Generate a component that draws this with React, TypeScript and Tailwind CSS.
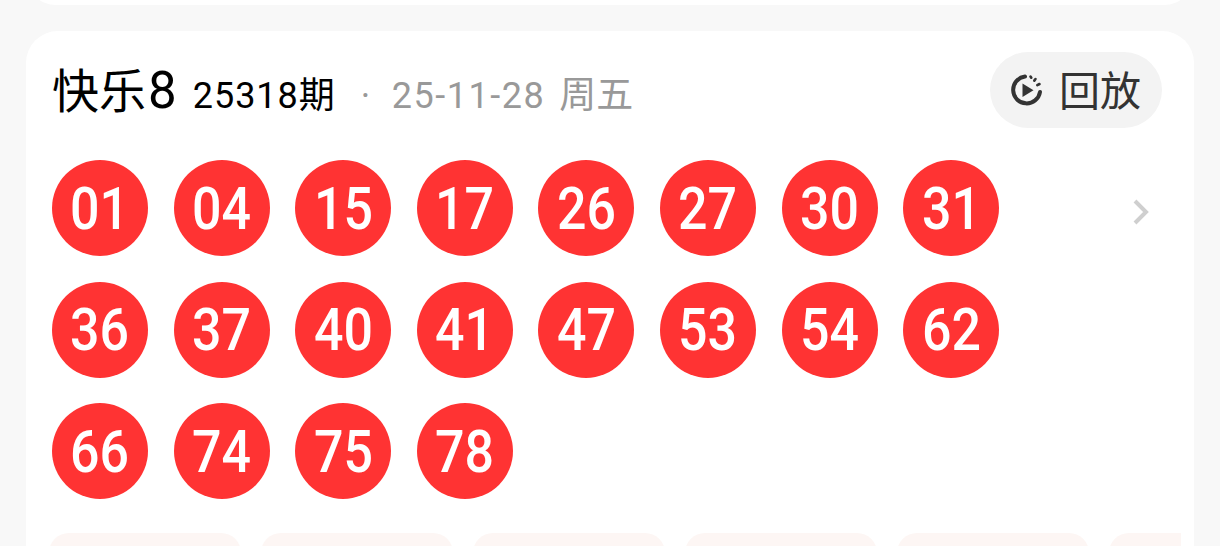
const balls = ["01","04","15","17","26","27","30","31","36","37","40","41","47","53","54","62","66","74","75","78"];
const chips = [0,1,2,3,4,5];
const cjk = "font-['Roboto','Noto_Sans_CJK_SC',sans-serif]";

export default function App() {
  return (
    <div className={`h-[546px] w-[1220px] overflow-hidden bg-[#f8f8f8] ${cjk}`}>
      <div className="mx-[26px] h-[5px] overflow-hidden">
        <div className="-mt-[55px] h-[60px] rounded-[32px] bg-white" />
      </div>
      <div className="mx-[26px] mt-[26px] h-[600px] rounded-[32px] bg-white pl-[26px] pr-[13px] pt-[21px]">
        <div className="flex h-[76px] items-center pr-[19px]">
          <div className="flex items-baseline text-black">
            <span className="text-[47px] leading-none">快乐<span className="ml-[2px] text-[51px]">8</span></span>
            <span className="ml-[16px] text-[36px] leading-none tracking-[1px]">25318期</span>
            <span className="ml-[25px] w-[31px] text-[36px] leading-none text-[#999]">·</span>
            <span className="text-[36px] leading-none tracking-[1.5px] text-[#999]">25-11-28</span>
            <span className="ml-[14px] text-[37px] leading-none text-[#999]">周五</span>
          </div>
          <div className="ml-auto flex h-[76px] w-[172px] items-center rounded-full bg-[#f3f3f3] pl-[19px]">
            <svg width="36" height="36" viewBox="0 0 36 36" fill="none">
              <path d="M16 4.5A13.5 13.5 0 1 0 31 20" stroke="#333" strokeWidth="4" strokeLinecap="round" />
              <path d="M13.5 11.5v13.5l11-6.75z" fill="#333" />
              <path d="M21.5 4.5l.8 1.2M26.5 7l-1.2 1.6M30.5 12l-2.2 1.2" stroke="#333" strokeWidth="2.6" strokeLinecap="round" />
            </svg>
            <span className="ml-[14px] mt-[4px] text-[41px] leading-none text-[#333]">回放</span>
          </div>
        </div>
        <div className="mt-[32px] flex">
          <div className="grid w-[947.2px] grid-cols-[repeat(8,96px)] gap-[25.6px]">
            {balls.map((b) => (
              <div key={b} className="flex h-24 w-24 items-center justify-center rounded-full bg-[#ff3333]">
                <span className="inline-block scale-x-[0.88] text-[59px] leading-none font-medium text-white">{b}</span>
              </div>
            ))}
          </div>
          <svg className="ml-[133px] mt-[38px]" width="18" height="28" viewBox="0 0 18 28" fill="none">
            <path d="M3 3l11 11L3 25" stroke="#cfcfcf" strokeWidth="4" />
          </svg>
        </div>
        <div className="-ml-[3px] mt-[34px] flex gap-[20px] overflow-hidden">
          {chips.map((c) => (
            <div key={c} className="h-[60px] w-[192px] shrink-0 rounded-[20px] bg-[#fdf6f4]" />
          ))}
        </div>
      </div>
    </div>
  );
}
